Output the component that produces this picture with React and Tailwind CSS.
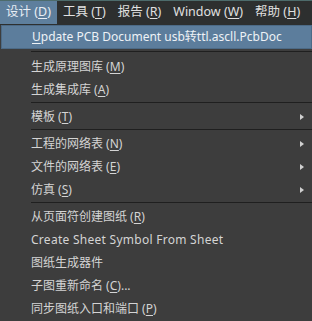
import React from "react";

const FONT = { fontFamily: '"Noto Sans", "Noto Sans CJK SC", sans-serif' };

function Key({ children }) {
  return <span className="underline underline-offset-2">{children}</span>;
}

function TopItem({ label, k, active }) {
  return (
    <div
      className={`flex items-center px-[6px] h-full ${
        active ? "bg-[#5e7f9d] text-[#e8eef4]" : "text-[#e0e0e0]"
      }`}
    >
      {label} (<Key>{k}</Key>)
    </div>
  );
}

function Row({ children, sub, wide }) {
  return (
    <div className="flex items-center h-[23px] pl-[31px] pr-[8px] text-[#d4d4d4]">
      <div className={`flex-1 whitespace-nowrap ${wide ? "tracking-[0.27px]" : ""}`}>{children}</div>
      {sub && (
        <div className="w-0 h-0 border-y-[3.5px] border-y-transparent border-l-[4px] border-l-[#d0d0d0]" />
      )}
    </div>
  );
}

function Sep({ tall }) {
  return (
    <div className={`pl-[31px] ${tall ? "h-[6px] pt-[2px]" : "h-[4px] pt-[1px]"}`}>
      <div className="h-px bg-[#1f1f1f]" />
    </div>
  );
}

export default function App() {
  return (
    <div
      className="w-[312px] h-[321px] bg-[#3d3d3d] overflow-hidden text-[12px] leading-none"
      style={FONT}
    >
      <div className="flex h-[24px] bg-[#2d2f2f] border-t border-[#4d6b6b] text-[12.5px]">
        <TopItem label="设计" k="D" active />
        <TopItem label="工具" k="T" />
        <TopItem label="报告" k="R" />
        <TopItem label="Window" k="W" />
        <TopItem label="帮助" k="H" />
      </div>
      <div className="h-[1px] bg-[#2d2f2f]" />
      <div className="ml-[1px] h-[24px] flex items-center pl-[30px] bg-[#5c7d9c] border border-[#4c6a86] text-[#eef2f6] whitespace-nowrap">
        <Key>U</Key>pdate PCB Document usb转ttl.ascll.PcbDoc
      </div>
      <Sep tall />
      <Row>生成原理图库 (<Key>M</Key>)</Row>
      <Row>生成集成库 (<Key>A</Key>)</Row>
      <Sep />
      <Row sub>模板 (<Key>T</Key>)</Row>
      <Sep />
      <Row sub>工程的网络表 (<Key>N</Key>)</Row>
      <Row sub>文件的网络表 (<Key>E</Key>)</Row>
      <Row sub>仿真 (<Key>S</Key>)</Row>
      <Sep />
      <Row>从页面符创建图纸 (<Key>R</Key>)</Row>
      <Row wide>Create Sheet Symbol From Sheet</Row>
      <Row>图纸生成器件</Row>
      <Row>子图重新命名 (<Key>C</Key>)...</Row>
      <Row>同步图纸入口和端口 (<Key>P</Key>)</Row>
    </div>
  );
}
